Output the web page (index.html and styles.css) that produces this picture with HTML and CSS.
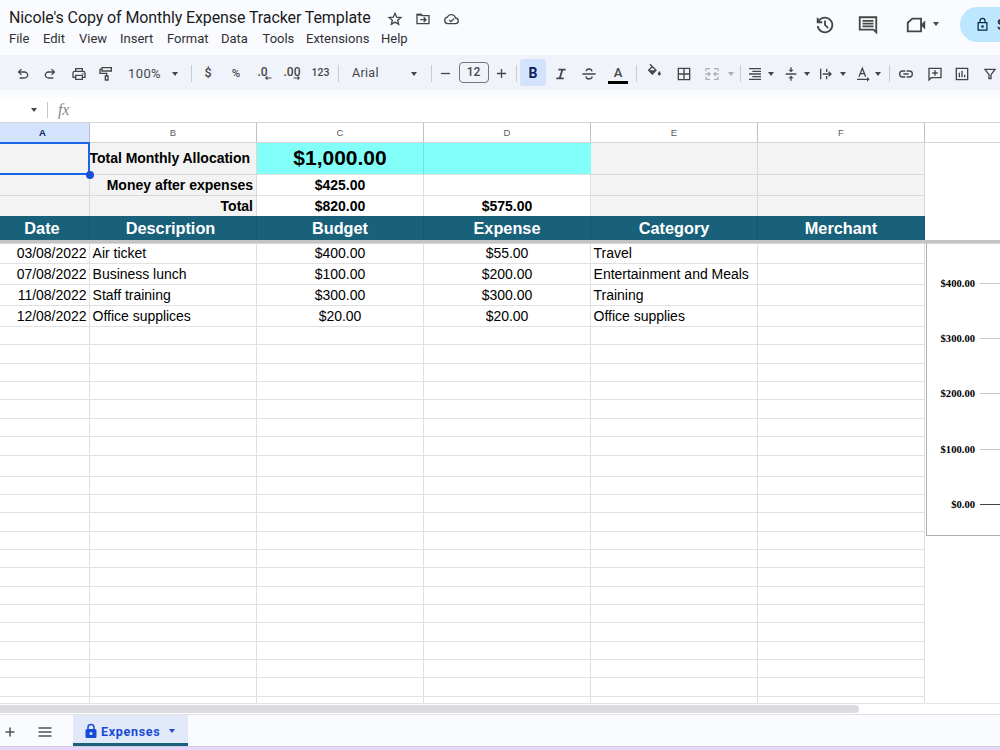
FILE: index.html
```html
<!DOCTYPE html>
<html lang="en">
<head>
<meta charset="utf-8">
<title>Monthly Expense Tracker</title>
<link rel="stylesheet" href="styles.css">
</head>
<body>
<header class="top">
  <div class="doc">
    <div class="title-row">
      <span class="title">Nicole's Copy of Monthly Expense Tracker Template</span>
      <svg class="ti" viewBox="0 0 24 24"><path class="s" d="M12 3.500l2.500 5.800 6.300.5-4.800 4.100 1.500 6.100-5.500-3.300L6.500 20 8 13.900 3.200 9.800l6.300-.5z"/></svg>
      <svg class="ti" viewBox="0 0 24 24"><path class="s" d="M3 5h6l2 2h10v12H3zM8 13h8M13 9.500l3.500 3.500-3.500 3.500"/><path d="M3 4h7l2 3H3z"/></svg>
      <svg class="ti cloud" viewBox="0 0 26 24"><path class="s" d="M7.500 19a5 5 0 0 1-.8-9.900A6.500 6.500 0 0 1 19 10.500a4.300 4.300 0 0 1 1 8.500zM9.500 13.500l2.700 2.600 4.600-4.600"/></svg>
    </div>
    <nav class="menu"><span>File</span><span>Edit</span><span>View</span><span>Insert</span><span>Format</span><span>Data</span><span>Tools</span><span>Extensions</span><span>Help</span></nav>
  </div>
  <div class="actions">
    <svg class="big" viewBox="0 0 24 24"><path d="M12 21q-3.450 0-6.012-2.287Q3.425 16.425 3.050 13H5.100q.35 2.600 2.313 4.300Q9.375 19 12 19q2.925 0 4.963-2.037Q19 14.925 19 12t-2.037-4.963Q14.925 5 12 5q-1.725 0-3.225.8T6.250 8H9v2H3V4h2v2.350q1.275-1.600 3.113-2.475Q9.950 3 12 3q1.875 0 3.513.712 1.637.713 2.850 1.925 1.212 1.213 1.925 2.850Q21 10.125 21 12t-.712 3.513q-.713 1.637-1.925 2.850-1.213 1.212-2.850 1.925Q13.875 21 12 21zm2.800-4.800L11 12.400V7h2v4.600l3.200 3.200z"/></svg>
    <svg class="big" viewBox="0 0 24 24"><path class="s" d="M3 3.500h18V20l-3-3H3zM6 7.500h12M6 10.500h12M6 13.500h12"/></svg>
    <svg class="big cam" viewBox="0 0 24 24"><path class="s" d="M8 5h9.500v14H3V9.500z"/><path d="M17 12l5-5v10z"/></svg>
    <i class="caret"></i>
    <div class="share"><svg class="lock" viewBox="0 0 24 24"><path class="s" d="M5 9h14v12H5zM8 9V6a4 4 0 0 1 8 0v3"/><circle cx="12" cy="15" r="2"/></svg><span>Share</span></div>
  </div>
</header>

<div class="toolbar">
  <b><svg viewBox="0 0 24 24"><path d="M7 19v-2h7.100q1.575 0 2.738-1Q18 15 18 13.500T16.838 11Q15.675 10 14.100 10H7.800l2.600 2.600L9 14 4 9l5-5 1.400 1.400L7.800 8h6.300q2.425 0 4.163 1.575Q20 11.150 20 13.500t-1.737 3.925Q16.525 19 14.100 19z"/></svg></b>
  <b><svg class="flip" viewBox="0 0 24 24"><path d="M7 19v-2h7.100q1.575 0 2.738-1Q18 15 18 13.500T16.838 11Q15.675 10 14.100 10H7.800l2.600 2.600L9 14 4 9l5-5 1.400 1.400L7.800 8h6.300q2.425 0 4.163 1.575Q20 11.150 20 13.500t-1.737 3.925Q16.525 19 14.100 19z"/></svg></b>
  <b><svg viewBox="0 0 24 24"><path class="s" d="M7 8V4h10v4M7 17H3v-6.500Q3 8 5.500 8h13Q21 8 21 10.500V17h-4M7 14h10v6H7z"/><circle cx="18" cy="11.500" r="1.100"/></svg></b>
  <b><svg viewBox="0 0 24 24"><path class="s" d="M6 2.500h14v5H6zM6 5H3v6h10v4M11 15h4v6h-4z"/></svg></b>
  <b class="txt">100%</b>
  <b><i class="caret"></i></b>
  <b><u></u></b>
  <b class="sym">$</b>
  <b class="sym pct">%</b>
  <b class="dec"><span>.0</span><svg viewBox="0 0 14 8"><path class="s" d="M13 4H3M6 1L3 4l3 3"/></svg></b>
  <b class="dec two"><span>.00</span><svg viewBox="0 0 14 8"><path class="s" d="M1 4h10M8 1l3 3-3 3"/></svg></b>
  <b class="num">123</b>
  <b><u></u></b>
  <b class="font">Arial</b>
  <b><i class="caret"></i></b>
  <b><u></u></b>
  <b><svg class="pm" viewBox="0 0 12 12"><path class="s" d="M1 6h10"/></svg></b>
  <b><span class="size">12</span></b>
  <b><svg class="pm" viewBox="0 0 12 12"><path class="s" d="M1 6h10M6 1v10"/></svg></b>
  <b><u></u></b>
  <b class="bold">B</b>
  <b><svg viewBox="0 0 24 24"><path d="M5 20v-2.600h4l3.300-10.800H8V4h11v2.600h-3.900l-3.300 10.800H16V20z"/></svg></b>
  <b><svg viewBox="0 0 24 24"><path class="s" d="M2 12h20M16.500 8c-.4-2.200-2-3.500-4.500-3.500S7.800 5.800 7.800 8M7.500 15.500c.4 2.700 2 4 4.500 4s4.700-1.300 4.700-3.600"/></svg></b>
  <b class="color"><span>A</span></b>
  <b><u></u></b>
  <b><svg class="fill" viewBox="0 0 24 24"><path class="s" d="M6 2l9 9-5.500 5.500L4 11l6-6"/><path d="M4 11h11l-5.500 5.500zM20 12q2.300 3 2.300 4.300a2.300 2.300 0 0 1-4.600 0Q17.700 15 20 12z"/></svg></b>
  <b><svg viewBox="0 0 24 24"><path class="s" d="M3.500 3.500h17v17h-17zM4 12h16M12 4v16"/></svg></b>
  <b class="off"><svg viewBox="0 0 24 24"><path class="s" d="M9 4H3v4M15 4h6v4M9 20H3v-4M15 20h6v-4M2 12h7M6.500 9.500L9 12l-2.500 2.500M22 12h-7M17.500 9.500L15 12l2.500 2.500"/></svg></b>
  <b class="off"><i class="caret"></i></b>
  <b><u></u></b>
  <b><svg viewBox="0 0 24 24"><path class="s" d="M3 4h18M8 8h13M3 12h18M8 16h13M3 20h18"/></svg></b>
  <b><i class="caret"></i></b>
  <b><svg viewBox="0 0 24 24"><path class="s" d="M4 12h16M12 2v5M12 22v-5"/><path d="M8 5.500h8L12 9.500zM8 18.500h8l-4-4z"/></svg></b>
  <b><i class="caret"></i></b>
  <b><svg viewBox="0 0 24 24"><path class="s" d="M4 4v16M13 4v5M13 15v5M7 12h12M16 8.500l3.500 3.500-3.500 3.500"/></svg></b>
  <b><i class="caret"></i></b>
  <b class="rot"><svg viewBox="0 0 24 24"><path class="s" d="M6 16l5-12.500L16 16M8 11.500h6M3 20h16"/><path d="M18 16.500l4 3.500-4 3.500z"/></svg></b>
  <b><i class="caret"></i></b>
  <b><u></u></b>
  <b><svg viewBox="0 0 24 24"><path class="s" d="M11 7.500H7a4.500 4.500 0 0 0 0 9h4M13 7.500h4a4.500 4.500 0 0 1 0 9h-4M8 12h8"/></svg></b>
  <b><svg viewBox="0 0 24 24"><path class="s" d="M3 21V3.500h18v14H6.500zM12 6.500v8M8 10.500h8"/></svg></b>
  <b><svg viewBox="0 0 24 24"><path class="s" d="M3.500 3.500h17v17h-17zM8 10v7M12 7v10M16 13v4"/></svg></b>
  <b><svg viewBox="0 0 24 24"><path class="s" d="M4.500 5h15l-6 8v6h-3v-6z"/></svg></b>
</div>

<div class="formula"><i class="caret"></i><u></u><em>fx</em></div>

<div class="row letters"><span class="sel">A</span><span>B</span><span>C</span><span>D</span><span>E</span><span>F</span></div>
<div class="frozen">
  <div class="row r1"><span class="g"><i class="pick"></i></span><span class="g right tot">Total Monthly Allocation</span><span class="cy amount">$1,000.00</span><span class="cy last"></span><span class="g"></span><span class="g"></span></div>
  <div class="row r2"><span class="g"></span><span class="g right">Money after expenses</span><span>$425.00</span><span></span><span class="g"></span><span class="g"></span></div>
  <div class="row r3"><span class="g"></span><span class="g right">Total</span><span>$820.00</span><span>$575.00</span><span class="g"></span><span class="g"></span></div>
  <div class="row head"><span class="h1">Date</span><span class="h2">Description</span><span>Budget</span><span>Expense</span><span>Category</span><span>Merchant</span></div>
</div>
<div class="freeze"></div>
<main class="sheet">
  <div class="rows">
    <div class="row d"><span>03/08/2022</span><span>Air ticket</span><span>$400.00</span><span>$55.00</span><span>Travel</span><span></span></div>
    <div class="row d"><span>07/08/2022</span><span>Business lunch</span><span>$100.00</span><span>$200.00</span><span>Entertainment and Meals</span><span></span></div>
    <div class="row d"><span>11/08/2022</span><span>Staff training</span><span>$300.00</span><span>$300.00</span><span>Training</span><span></span></div>
    <div class="row d"><span>12/08/2022</span><span>Office supplices</span><span>$20.00</span><span>$20.00</span><span>Office supplies</span><span></span></div>
    <div class="row e"><span></span><span></span><span></span><span></span><span></span><span></span></div>
    <div class="row e"><span></span><span></span><span></span><span></span><span></span><span></span></div>
    <div class="row e"><span></span><span></span><span></span><span></span><span></span><span></span></div>
    <div class="row e"><span></span><span></span><span></span><span></span><span></span><span></span></div>
    <div class="row e"><span></span><span></span><span></span><span></span><span></span><span></span></div>
    <div class="row e"><span></span><span></span><span></span><span></span><span></span><span></span></div>
    <div class="row e"><span></span><span></span><span></span><span></span><span></span><span></span></div>
    <div class="row d"><span></span><span></span><span></span><span></span><span></span><span></span></div>
    <div class="row e"><span></span><span></span><span></span><span></span><span></span><span></span></div>
    <div class="row e"><span></span><span></span><span></span><span></span><span></span><span></span></div>
    <div class="row e"><span></span><span></span><span></span><span></span><span></span><span></span></div>
    <div class="row e"><span></span><span></span><span></span><span></span><span></span><span></span></div>
    <div class="row e"><span></span><span></span><span></span><span></span><span></span><span></span></div>
    <div class="row e"><span></span><span></span><span></span><span></span><span></span><span></span></div>
    <div class="row e"><span></span><span></span><span></span><span></span><span></span><span></span></div>
    <div class="row e"><span></span><span></span><span></span><span></span><span></span><span></span></div>
    <div class="row e"><span></span><span></span><span></span><span></span><span></span><span></span></div>
    <div class="row e"><span></span><span></span><span></span><span></span><span></span><span></span></div>
    <div class="row e"><span></span><span></span><span></span><span></span><span></span><span></span></div>
    <div class="row e"><span></span><span></span><span></span><span></span><span></span><span></span></div>
    <div class="row e"><span></span><span></span><span></span><span></span><span></span><span></span></div>
  </div>
  <aside class="chart">
    <div class="tick">$400.00</div><div class="tick">$300.00</div><div class="tick">$200.00</div><div class="tick">$100.00</div><div class="tick zero">$0.00</div>
  </aside>
</main>
<div class="scroll"><div class="thumb"></div></div>
<footer class="tabs">
  <svg class="add" viewBox="0 0 12 12"><path class="s" d="M1.500 6h9M6 1.500v9"/></svg>
  <svg class="list" viewBox="0 0 14 12"><path class="s" d="M.5 2h13M.5 6h13M.5 10h13"/></svg>
  <div class="tab">
    <svg viewBox="0 0 12 16"><path class="s" d="M3 7V4.500a3 3 0 0 1 6 0V7"/><path fill-rule="evenodd" d="M2 6h8q1.500 0 1.500 1.500v6Q11.500 15 10 15H2Q.5 15 .5 13.500v-6Q.5 6 2 6zM6 9a1.500 1.500 0 1 0 0 3a1.500 1.500 0 1 0 0-3z"/></svg>
    <span>Expenses</span><i class="caret"></i>
  </div>
</footer>
<div class="edge"></div>
</body>
</html>
```

FILE: styles.css
```css
* { box-sizing: border-box; }
body {
  margin: 0;
  width: 1000px;
  height: 750px;
  overflow: hidden;
  display: flex;
  flex-direction: column;
  background: #fff;
  color: #000;
  font-family: Roboto, "Liberation Sans", sans-serif;
}
svg { flex: none; fill: currentColor; display: block; }
.s { fill: none; stroke: currentColor; stroke-width: 2; }
.caret {
  flex: none;
  width: 0;
  border: 3.500px solid transparent;
  border-top: 4px solid currentColor;
  border-bottom: 0;
}

/* title and menus */
.top { flex: none; height: 55px; background: #fafbff; display: flex; justify-content: space-between; color: #444746; }
.doc { padding: 8px 0 0 9px; }
.title-row { display: flex; align-items: center; height: 22px; gap: 12px; }
.title { width: 366px; white-space: nowrap; font-size: 16px; line-height: 20px; margin-top: -2px; letter-spacing: -.1px; color: #1b1b1c; }
.ti { width: 16px; height: 16px; }
.ti.cloud { width: 17px; }
.menu {
  display: grid;
  grid-template-columns: 34px 36px 41px 47px 54px 41.500px 43.500px 75px 40px;
  padding-top: 1px;
  font-size: 13px;
  line-height: 16px;
  color: #303133;
}
.actions { display: flex; align-items: flex-start; color: #444746; }
.big { width: 22px; height: 22px; margin: 14px 21px 0 0; }
.cam { margin-right: 6px; margin-top: 14px; margin-left: 5px; }
.actions .caret { margin: 22px 21px 0 0; }
.share {
  width: 40px;
  height: 35px;
  margin-top: 7px;
  border-radius: 18px 0 0 18px;
  background: #bde7ff;
  color: #0b2a45;
  display: flex;
  align-items: center;
  gap: 7px;
  padding-left: 15px;
  overflow: hidden;
  font-weight: 500;
  font-size: 14px;
}
.lock { width: 15px; height: 17px; }

/* toolbar */
.toolbar {
  flex: none;
  height: 35px;
  padding-left: 9px;
  background: #f0f3fa;
  color: #444746;
  display: grid;
  grid-template-columns:
    27px 28px 29px 26px 51px 10px 22px 12px 44px 12px 44px 13px 22px
    52px 26px 8px 21px 35px 21px 8px 26px 30px 26px 32px 4px
    32px 27px 30px 7px 12px 18px 14px 26px 6px 31px 4px 30px 6px 17px
    16px 41px 14px 42px;
}
.toolbar b { display: flex; align-items: center; justify-content: center; font-weight: 400; min-width: 0; white-space: nowrap; padding-top: 2px; }
.toolbar svg { width: 16px; height: 16px; }
.toolbar .flip { transform: scaleX(-1); }
.toolbar u { flex: none; width: 1px; height: 17px; background: #c9ccd1; }
.toolbar .txt { font-size: 13px; letter-spacing: .4px; }
.toolbar .sym { font-size: 12.500px; font-weight: 500; padding-top: 0; }
.toolbar .pct { font-size: 11.500px; }
.toolbar .dec { position: relative; font-size: 12px; font-weight: 500; padding: 0 3px 2px 0; }
.toolbar .dec svg { position: absolute; width: 8px; height: 6px; left: 6px; top: 20px; }
.toolbar .two svg { left: 23px; }
.toolbar .two { padding-right: 0; }
.toolbar .num { font-size: 10.500px; font-weight: 500; padding-top: 0; }
.toolbar .font { justify-content: flex-start; padding-left: 3px; padding-top: 0; font-size: 12.500px; letter-spacing: .3px; }
.toolbar .pm { width: 11px; height: 11px; }
.toolbar .pm .s { stroke-width: 1.400; }
.size { flex: none; width: 30px; height: 21px; margin-top: -2px; border: 1px solid #747775; border-radius: 4px; text-align: center; font-size: 12px; font-weight: 500; line-height: 19px; }
.toolbar .bold { margin: 4px 0; padding: 1px 0 0; border-radius: 3px; background: #d3e3fd; color: #0b2260; font-size: 14px; font-weight: 700; }
.toolbar .color { padding: 0; }
.color span { width: 20px; flex: none; text-align: center; font-size: 13px; line-height: 14px; font-weight: 500; border-bottom: 3px solid #000; margin-top: 4px; height: 18px; }
.toolbar .fill { margin-top: -6px; }
.toolbar .off { color: #adafb2; }
.toolbar .rot { padding-left: 6px; }

/* formula bar */
.formula { flex: none; height: 32px; border-top: 7px solid #fafbff; display: flex; align-items: center; padding: 0 0 0 31px; color: #444746; }
.formula u { width: 1px; height: 16px; background: #c7c7c7; margin: 0 10px 0 10px; }
.formula em { font: italic 16px "Liberation Serif", serif; letter-spacing: -.2px; color: #858789; }

/* grid */
.row { display: grid; grid-template-columns: 90px repeat(5, 167px); width: 925px; font-family: "Liberation Sans", Arial, sans-serif; }
.row span { border-right: 1px solid #dfdfdf; border-bottom: 1px solid #e1e1e1; display: flex; align-items: center; justify-content: center; white-space: nowrap; min-width: 0; }
.letters { flex: none; width: 1000px; height: 21px; border-top: 1px solid #d5d5d5; border-bottom: 1px solid #d5d5d5; font-size: 9.500px; color: #575a5c; }
.letters span { border-bottom: 0; border-color: #c0c0c0; }
.letters .sel { background: #d3e3fd; color: #0b2260; font-weight: 700; padding-right: 4px; }
.frozen { flex: none; font-weight: 700; font-size: 14px; }
.r1 { height: 32px; }
.r2 { height: 21px; }
.r3 { height: 20px; }
.r3 span { border-bottom: 0; }
.row .g { background: #f3f3f3; border-color: #d9d9d9; }
.row .cy { background: #83fffa; border-right-color: #70e3df; }
.row .last { border-right-color: #83fffa; }
.row .right { justify-content: flex-end; padding-right: 3px; }
.row .tot { padding-right: 6px; letter-spacing: -.02px; }
.row .amount { font-size: 21px; }
.r1 span { position: relative; padding-bottom: 1px; }
.pick { position: absolute; left: -2px; top: -1px; width: 92px; height: 33px; border: 2px solid #1a66e8; z-index: 2; }
.pick::after { content: ""; position: absolute; right: -6px; bottom: -6px; width: 8px; height: 8px; border-radius: 50%; background: #174fd6; }
.head { height: 24px; background: #19617a; color: #fff; font-size: 16.300px; }
.head span { border-bottom: 0; border-right-color: #13566d; padding-top: 1px; }
.head .h1, .head .h2 { padding-right: 5px; }
.freeze { flex: none; height: 4px; background: #c4c4c4; border-bottom: 1px solid #d7d7d7; }
.sheet { flex: none; height: 460px; margin-top: -1px; display: flex; overflow: hidden; }
.rows { flex: none; width: 925px; }
.d { height: 21px; font-size: 14px; letter-spacing: -.02px; }
.d span:nth-child(1) { justify-content: flex-end; padding-right: 2.500px; }
.d span:nth-child(2), .d span:nth-child(5) { justify-content: flex-start; padding-left: 2.600px; }
.e { height: 18.370px; }
.chart { flex: none; width: 89px; height: 293px; margin-left: 1px; border: 1px solid #aeaeae; border-top: 0; padding-top: 12.500px; font: bold 10.600px "Liberation Serif", serif; }
.tick { height: 55.300px; display: flex; align-items: center; justify-content: flex-end; gap: 5px; padding-right: 0; }
.tick::after { content: ""; width: 34px; height: 1px; background: #c9c9c9; }
.zero::after { background: #444; }

/* bottom */
.scroll { flex: none; height: 12px; border-top: 1px solid #e4e4e4; border-bottom: 1px solid #e0e0e0; }
.thumb { width: 859px; height: 8px; margin-top: 1px; border-radius: 0 4px 4px 0; background: #dadce0; }
.tabs { flex: none; height: 31px; display: flex; align-items: center; background: #fafbff; color: #505355; }
.add { width: 12px; height: 12px; margin: 2px 22px 0 4px; }
.list { width: 14px; height: 12px; margin: 2px 21px 0 0; }
.add .s, .list .s { stroke-width: 1.500; }
.tab { width: 115px; height: 31px; display: flex; align-items: center; padding: 4px 0 0 12px; background: #e1e9f8; border-bottom: 3px solid #19617a; color: #174bd6; font-weight: 700; font-size: 12.500px; letter-spacing: .7px; }
.tab svg { width: 12px; height: 16px; margin-right: 4px; }
.tab .s { stroke-width: 1.500; }
.tab .caret { margin-left: 9px; }
.edge { flex: none; height: 4px; background: #e6d7fa; border-top: 1px solid #d5cbe0; }
```
